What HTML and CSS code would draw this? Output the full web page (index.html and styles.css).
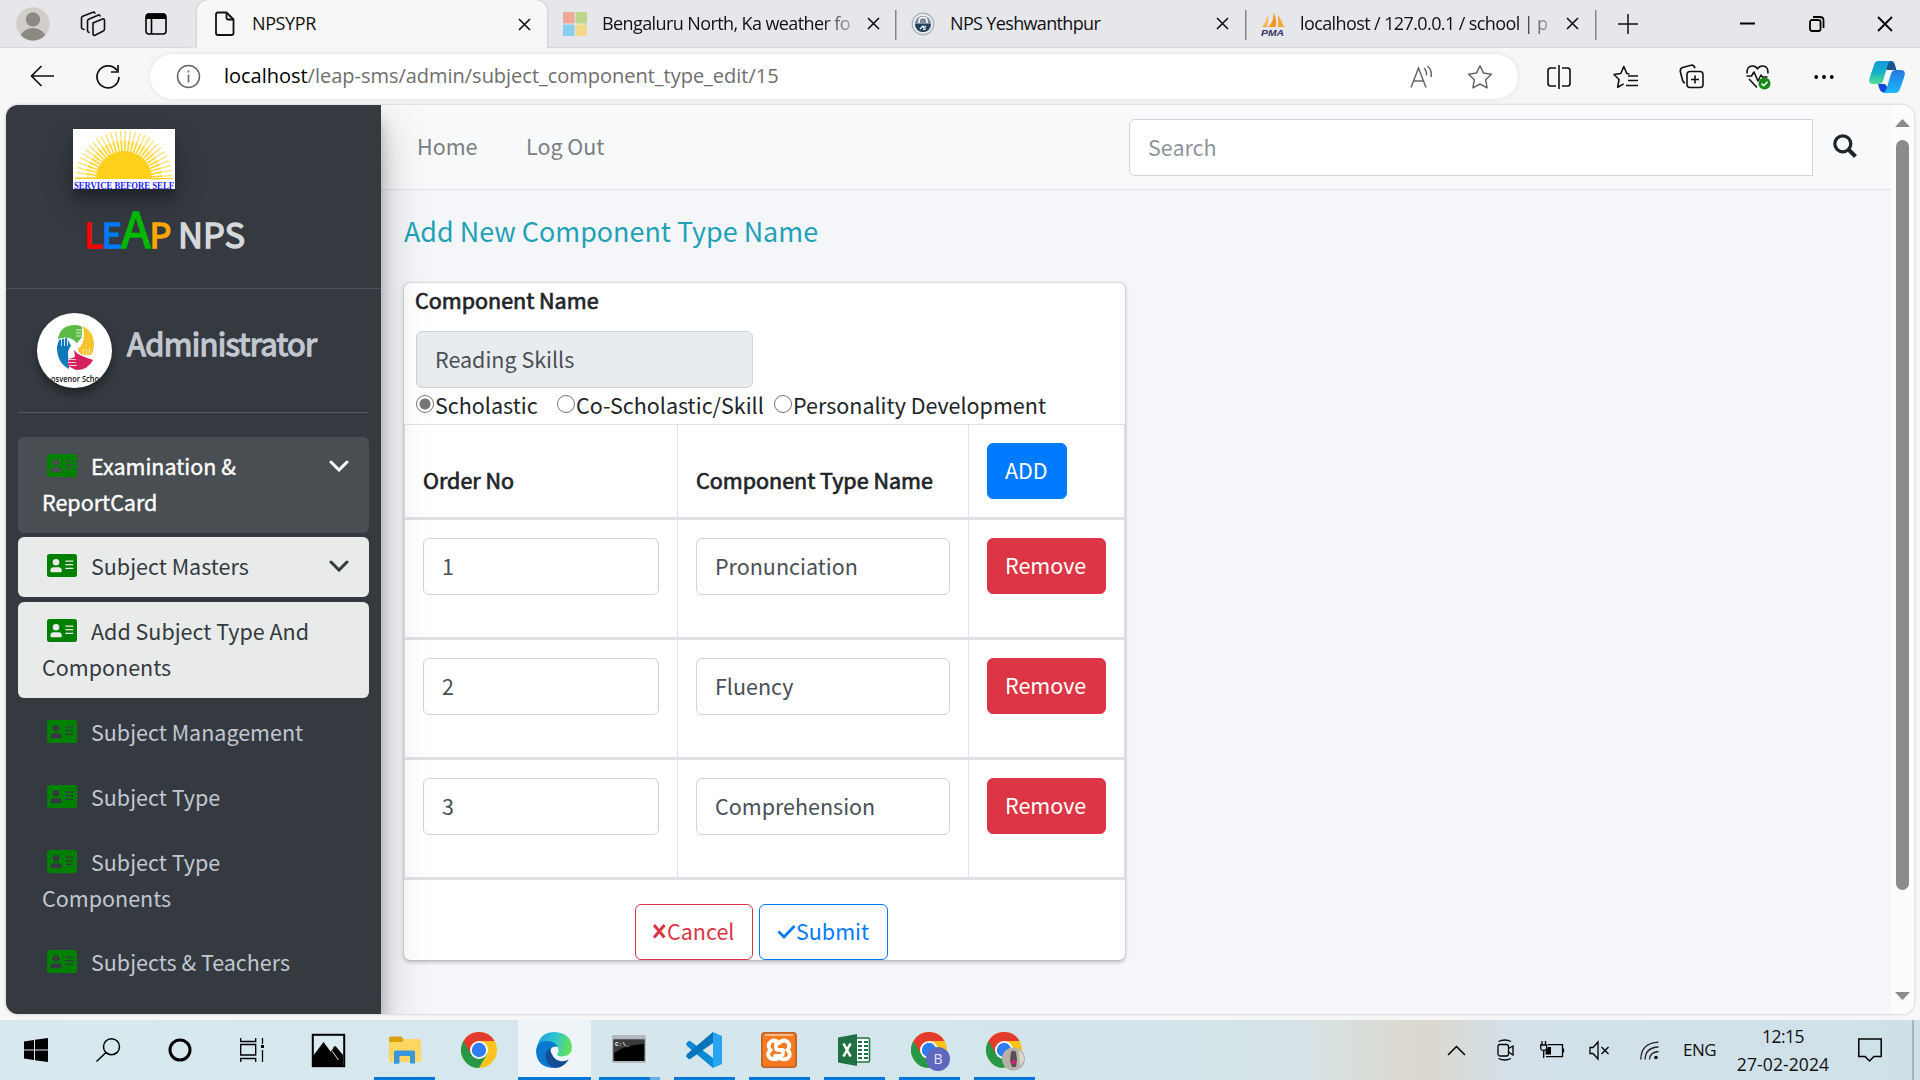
FILE: index.html
```html
<!DOCTYPE html>
<html lang="en">
<head>
<meta charset="utf-8">
<title>NPSYPR</title>
<link rel="stylesheet" href="styles.css">
</head>
<body>
<svg class="defs" aria-hidden="true">
  <symbol id="idcard" viewBox="0 0 30 23"><path fill="currentColor" fill-rule="evenodd" d="M2.500 0h25A2.500 2.500 0 0 1 30 2.500v18a2.500 2.500 0 0 1-2.500 2.500h-25A2.500 2.500 0 0 1 0 20.500v-18A2.500 2.500 0 0 1 2.500 0zM9 5a3.300 3.300 0 1 0 0 6.600A3.300 3.300 0 0 0 9 5zM6.500 13.300A3 3 0 0 0 3.500 16.300v1.200q0 .700.700.700h9.800q.700 0 .700-.700v-1.200a3 3 0 0 0-3-3zM18.300 6.500v1.200h8V6.500zM18.300 10v1.300h8V10zM18.300 13.700v1.200h8v-1.200z"/></symbol>
  <symbol id="close" viewBox="0 0 13 13"><path d="M1 1l11 11M12 1L1 12" stroke="currentColor" stroke-width="1.600" fill="none"/></symbol>
  <symbol id="chev" viewBox="0 0 20 12"><path d="M2 2l8 8 8-8" fill="none" stroke="currentColor" stroke-width="3" stroke-linecap="round" stroke-linejoin="miter"/></symbol>
  <symbol id="chrome" viewBox="0 0 36 36">
    <circle cx="18" cy="18" r="18" fill="#fcc31e"/>
    <path d="M2.400 9A18 18 0 0 0 18 36l7.800-13.500L18 18z" fill="#279847"/>
    <path d="M10.200 22.500L2.400 9A18 18 0 0 1 33.600 9H18z" fill="#e33b2e"/>
    <circle cx="18" cy="18" r="9" fill="#fff"/><circle cx="18" cy="18" r="7.200" fill="#2f7cee"/>
  </symbol>
</svg>

<header class="tabstrip">
  <div class="tab-tools">
    <svg width="34" height="34" viewBox="0 0 34 34"><defs><clipPath id="av"><circle cx="17" cy="17" r="16.500"/></clipPath></defs><circle cx="17" cy="17" r="16.800" fill="#d2cfcb"/><g clip-path="url(#av)" fill="#8d8983"><circle cx="17" cy="12.500" r="7.200"/><ellipse cx="17" cy="31" rx="12.500" ry="10"/></g></svg>
    <svg class="i-work" width="26" height="26" viewBox="0 0 26 26" fill="none" stroke="#111" stroke-width="1.600" stroke-linejoin="round" stroke-linecap="round"><path d="M13 12l9.500-4q2-.600 2 1.400V18q0 1.500-1.200 2L15 24.200q-2 .700-2-1.400z"/><path d="M9 21.500q-1.500-.500-1.500-2V10q0-1.200 1.200-1.800L18.500 4q1.500-.400 1.500 1"/><path d="M4 18.500q-2.500-.500-2.500-2V7q0-1.200 1.200-1.800L13 1.200q1.500-.400 1.800 1"/></svg>
    <svg class="i-tabs" width="22" height="22" viewBox="0 0 22 22"><rect x="1" y="1" width="20" height="20" rx="3" fill="none" stroke="#000" stroke-width="1.600"/><path d="M1 6V3q0-2.500 2.500-2.500h15Q21 .500 21 3v3z"/><path d="M6.500 6v15" stroke="#000" stroke-width="1.600"/></svg>
  </div>
  <div class="tab active">
    <svg width="24" height="26" viewBox="0 0 24 26" fill="none" stroke="#111" stroke-width="1.800" stroke-linejoin="round"><path d="M5 1.500h8.500l7 7V22q0 2-2 2H5q-2 0-2-2V3.500q0-2 2-2z"/><path d="M13.500 1.500V7q0 1.500 1.500 1.500h5.500"/></svg>
    <span class="tt t1">NPSYPR</span><svg class="x" width="13" height="13"><use href="#close"/></svg>
  </div>
  <div class="tab t2">
    <svg width="24" height="24" viewBox="0 0 24 24"><path fill="#eea898" d="M0 0h11.500v11.500H0z"/><path fill="#bcd78c" d="M12.500 0H24v11.500H12.500z"/><path fill="#8bceef" d="M0 12.500h11.500V24H0z"/><path fill="#f3d78b" d="M12.500 12.500H24V24H12.500z"/></svg>
    <span class="tt fade">Bengaluru North, Ka weather fo</span><svg class="x" width="13" height="13"><use href="#close"/></svg>
  </div>
  <div class="tab sep">
    <svg width="24" height="24" viewBox="0 0 24 24"><circle cx="12" cy="12" r="10.800" fill="#e9ebee" stroke="#aab4bd" stroke-width="1.300"/><circle cx="12" cy="12" r="8" fill="#7d8b9c"/><path d="M4 12h16a8 8 0 0 1-16 0z" fill="#24405f"/><path d="M8 11V9q0-3.500 4-3.500T16 9v2" stroke="#fff" stroke-width="1.600" fill="none"/><path d="M9 17l3-3 1 2 2-2M12 17.500l3-.500" stroke="#fff" stroke-width="1.200" fill="none"/></svg>
    <span class="tt t3">NPS Yeshwanthpur</span><svg class="x" width="13" height="13"><use href="#close"/></svg>
  </div>
  <div class="tab sep">
    <svg width="24" height="24" viewBox="0 0 24 24"><path d="M7 3q1 6-1 12H1Q5 10 7 3z" fill="#fbb55c"/><path d="M12.500 0q4 8 2 15H7q6-5 5.500-15z" fill="#f8931c"/><path d="M17 3q4 6 6 12h-6z" fill="#fba93f"/><text x="0" y="23.500" class="pma" textLength="23" lengthAdjust="spacingAndGlyphs">PMA</text></svg>
    <span class="tt fade t4">localhost / 127.0.0.1 / school | p</span><svg class="x" width="13" height="13"><use href="#close"/></svg>
  </div>
  <div class="tab-end sep">
    <svg width="20" height="20" viewBox="0 0 20 20"><path d="M10 0v20M0 10h20" stroke="#111" stroke-width="1.500"/></svg>
    <svg class="w1" width="15" height="16" viewBox="0 0 15 16"><path d="M0 7.500h15" stroke="#000" stroke-width="2"/></svg>
    <svg class="w2" width="16" height="16" viewBox="0 0 16 16" fill="none" stroke="#000" stroke-width="1.800"><rect x="1" y="4" width="10.500" height="11" rx="2"/><path d="M4 1h7q3.500 0 3.500 3.500V12"/></svg>
    <svg class="w3" width="16" height="16" viewBox="0 0 16 16"><path d="M1 1l14 14M15 1L1 15" stroke="#000" stroke-width="1.800"/></svg>
  </div>
</header>

<div class="toolbar">
  <svg class="back" width="24" height="22" viewBox="0 0 24 22" fill="none" stroke="#111" stroke-width="1.700"><path d="M11.500 1L1.500 11l10 10M1.500 11H24"/></svg>
  <svg class="reload" width="26" height="26" viewBox="0 0 26 26" fill="none" stroke="#111" stroke-width="1.700"><path d="M22 6.500A11 11 0 1 0 24 13"/><path d="M23 1v7h-7"/></svg>
  <div class="pill">
    <svg width="25" height="25" viewBox="0 0 25 25"><circle cx="12.500" cy="12.500" r="11" fill="none" stroke="#666" stroke-width="1.500"/><path d="M12.500 10.500v8M12.500 6.500v2" stroke="#666" stroke-width="1.600"/></svg>
    <span class="url"><b>localhost</b>/leap-sms/admin/subject_component_type_edit/15</span>
    <svg class="aloud" width="24" height="24" viewBox="0 0 24 24" fill="none" stroke="#666" stroke-width="1.500"><path d="M1 22.500L8.500 3 16 22.500M3.700 16h9.600M14 3q3 3 2.500 7.500M17.500 1q5 4.500 3.500 11"/></svg>
    <svg class="star" width="26" height="26" viewBox="0 0 26 26" fill="none" stroke="#666" stroke-width="1.500" stroke-linejoin="round"><path d="M13 1.800l3.500 7.300 7.900 1.100-5.700 5.600 1.400 8-7.100-3.800-7.100 3.800 1.400-8-5.700-5.600 7.900-1.100z"/></svg>
  </div>
  <svg class="a1" width="24" height="24" viewBox="0 0 24 24" fill="none" stroke="#111" stroke-width="1.600"><path d="M12 0v24M9 3H3.500Q1 3 1 5.500v13Q1 21 3.500 21H9M15 3h5.500Q23 3 23 5.500v13q0 2.500-2.500 2.500H15"/></svg>
  <svg class="a2" width="26" height="24" viewBox="0 0 26 24" fill="none" stroke="#111" stroke-width="1.600" stroke-linejoin="round"><path d="M16.500 9L13.800 8.500 10.800 1.500 7.800 8.500 1 9.500l5 5-1.300 7.700 6-3.300M15 11h10M15 15.500h10M13 20.500h12"/></svg>
  <svg class="a3" width="25" height="25" viewBox="0 0 25 25" fill="none" stroke="#111" stroke-width="1.600"><rect x="8" y="7.500" width="16" height="16" rx="3"/><path d="M16 11.500v8M12 15.500h8M6 19q-2-.700-2.500-3L1.300 7.500Q1 4.500 3.500 3.500L12 1.200q3-.500 4 3"/></svg>
  <svg class="a4" width="26" height="26" viewBox="0 0 26 26" fill="none" stroke="#111" stroke-width="1.600" stroke-linejoin="round"><path d="M2 9.500Q1.500 2 7.500 2q3.500 0 5 3 1.500-3 5-3 6 0 5.500 7.500M4 15l8 8.500M1.500 12h5l2.500-4 4 9 3-6 1.500 2h5"/><circle cx="19.500" cy="19.500" r="6" fill="#138a17" stroke="none"/><path d="M16.500 19.500l2.200 2.200 3.800-4" stroke="#fff"/></svg>
  <svg class="a5" width="20" height="6" viewBox="0 0 20 6"><circle cx="2.200" cy="3" r="1.900"/><circle cx="10" cy="3" r="1.900"/><circle cx="17.800" cy="3" r="1.900"/></svg>
  <svg class="a6" width="36" height="32" viewBox="0 0 36 32"><defs><linearGradient id="g1" x1="0" y1="0" x2="0" y2="1"><stop offset="0" stop-color="#1596dd"/><stop offset=".5" stop-color="#12b3c5"/><stop offset="1" stop-color="#56e08f"/></linearGradient><linearGradient id="g2" x1="0" y1="0" x2="0" y2="1"><stop offset="0" stop-color="#2778de"/><stop offset="1" stop-color="#19b9fa"/></linearGradient></defs><path d="M19 0h3q3 0 4 4l1.500 5H17z" fill="#17578e"/><path d="M9 0h13q-3 1-4 6l-4 14q-1 3-4 3H4Q-1 23 .500 17L5 4Q6 0 9 0z" fill="url(#g1)"/><path d="M9 23h7l3 4-2 5q-5 0-6.500-4z" fill="#1847d8"/><path d="M27 9h5q5 0 3.500 6L31 28q-1.500 4-5 4H14q3-1 4-6l4-13q1-4 5-4z" fill="url(#g2)"/></svg>
</div>

<div class="page">
  <aside class="sidebar">
    <div class="brand">
      <svg class="logo" width="102" height="60" viewBox="0 0 102 60"><rect width="102" height="60" fill="#fff"/><circle class="ray-in" cx="51" cy="50" r="33" pathLength="240"/><circle class="ray-out" cx="51" cy="50" r="43" pathLength="240"/><path d="M23 50a28 28 0 0 1 56 0z" fill="#ffd11c"/><path d="M2 49.500h98" stroke="#ffd11c"/><rect y="50.500" width="102" height="10" fill="#fff"/><text x="1" y="59.500" class="motto" textLength="100" lengthAdjust="spacingAndGlyphs">SERVICE BEFORE SELF</text></svg>
      <div class="leap"><i class="r">L</i><i class="b">E</i><i class="g">A</i><i class="o">P</i> NPS</div>
    </div>
    <div class="user">
      <svg class="badge" width="75" height="75" viewBox="0 0 75 75"><defs><clipPath id="cc"><circle cx="37.500" cy="37.500" r="37.500"/></clipPath></defs><circle cx="37.500" cy="37.500" r="37.500" fill="#fff"/><g clip-path="url(#cc)">
        <path d="M21 26Q23 12 38 12q5 0 7 2v10l-5 6q-6-6-12-5-4 0-7 1z" fill="#5cbb46"/><path d="M39 17h6M39 20h6M39 23h6" stroke="#d5f0c4"/>
        <path d="M46 13q11 6 11 18 0 7-3 11h-8q-6-3-5-6 6-5 6-14z" fill="#f6c52e"/><path d="M46.500 36v6M49.500 36v6M52.500 35v6" stroke="#fdeaa8"/>
        <path d="M22 27l8-2 4 8q-3 3-3 8l1 15Q20 50 20 34z" fill="#0f78b9"/><path d="M24.500 25v8M27.500 24v9M30.500 25v8" stroke="#d0eaf6"/>
        <path d="M37 37q3 4 8 6t11 4q-5 10-17 10l-8-4 1-7 6-2z" fill="#d61f5c"/><path d="M31 46.500h8M31 49.500h8M32 52.500h8" stroke="#f9c9d6"/>
        <text x="14" y="69" class="gsch" textLength="48" lengthAdjust="spacingAndGlyphs">osvenor Scho</text></g></svg>
      <span class="admin">Administrator</span>
    </div>
    <nav class="menu">
      <a class="item on"><svg class="id" width="30" height="23"><use href="#idcard"/></svg>Examination &amp;<svg class="ch" width="20" height="12"><use href="#chev"/></svg><br>ReportCard</a>
      <a class="item light"><svg class="id" width="30" height="23"><use href="#idcard"/></svg>Subject Masters<svg class="ch" width="20" height="12"><use href="#chev"/></svg></a>
      <a class="item light"><svg class="id" width="30" height="23"><use href="#idcard"/></svg>Add Subject Type And<br>Components</a>
      <a class="item"><svg class="id" width="30" height="23"><use href="#idcard"/></svg>Subject Management</a>
      <a class="item"><svg class="id" width="30" height="23"><use href="#idcard"/></svg>Subject Type</a>
      <a class="item"><svg class="id" width="30" height="23"><use href="#idcard"/></svg>Subject Type<br>Components</a>
      <a class="item"><svg class="id" width="30" height="23"><use href="#idcard"/></svg>Subjects &amp; Teachers</a>
    </nav>
  </aside>
  <main class="main">
    <div class="navbar">
      <a>Home</a><a>Log Out</a>
      <div class="search">Search</div>
      <svg class="mag" width="24" height="24" viewBox="0 0 24 24" fill="none" stroke="#212529"><circle cx="9.800" cy="9.800" r="8" stroke-width="3.300"/><path d="M15.500 15.500l7 7" stroke-width="4"/></svg>
    </div>
    <h1 class="title">Add New Component Type Name</h1>
    <section class="card">
      <div class="label">Component Name</div>
      <div class="field off">Reading Skills</div>
      <div class="radios"><span class="radio sel"></span><span class="ra">Scholastic</span><span class="radio"></span><span class="rb">Co-Scholastic/Skill</span><span class="radio"></span><span>Personality Development</span></div>
      <div class="grid">
        <div class="cell head">Order No</div><div class="cell head">Component Type Name</div><div class="cell act"><span class="btn add">ADD</span></div>
        <div class="cell"><div class="field">1</div></div><div class="cell"><div class="field">Pronunciation</div></div><div class="cell"><span class="btn rem">Remove</span></div>
        <div class="cell"><div class="field">2</div></div><div class="cell"><div class="field">Fluency</div></div><div class="cell"><span class="btn rem">Remove</span></div>
        <div class="cell"><div class="field">3</div></div><div class="cell"><div class="field">Comprehension</div></div><div class="cell"><span class="btn rem">Remove</span></div>
      </div>
      <div class="foot">
        <span class="btn cancel"><svg width="15" height="15" viewBox="0 0 15 15"><path d="M2 1l10.500 12.500M12.500 1L2 13.500" stroke="currentColor" stroke-width="3"/></svg>Cancel</span>
        <span class="btn submit"><svg width="19" height="15" viewBox="0 0 19 15"><path d="M1.500 7.500l5.500 5.500L17.500 2" stroke="currentColor" stroke-width="2.700" fill="none"/></svg>Submit</span>
      </div>
    </section>
  </main>
  <div class="scroll"><svg width="15" height="8"><path d="M7.500 0L15 8H0z" fill="#8b8b8b"/></svg><i></i><svg class="dn" width="15" height="8"><path d="M7.500 8L15 0H0z" fill="#8b8b8b"/></svg></div>
</div>

<footer class="taskbar">
  <div class="tb plain"><svg width="24" height="24" viewBox="0 0 24 24"><path d="M0 3.400l10-1.400v9.500H0zM11 1.800L24 0v11.500H11zM0 12.500h10V22L0 20.600zM11 12.500h13V24l-13-1.800z"/></svg></div>
  <div class="tb plain"><svg width="24" height="24" viewBox="0 0 24 24" fill="none" stroke="#000" stroke-width="1.500"><circle cx="15.500" cy="8.700" r="8"/><path d="M10 14.500L.500 23.500"/></svg></div>
  <div class="tb plain"><svg width="24" height="24" viewBox="0 0 24 24"><circle cx="12" cy="12" r="10" fill="none" stroke="#000" stroke-width="3"/></svg></div>
  <div class="tb plain"><svg width="24" height="24" viewBox="0 0 24 24" fill="none" stroke="#000" stroke-width="1.300"><path d="M.700 6.500h15v10.500H.700zM.700 0v3.500h15V0M.700 24v-3.500h15V24M22.500 0v6M22.500 12v12"/><path d="M21 7h3v3h-3z" fill="#000" stroke="none"/></svg></div>
  <div class="tb photo"><svg width="33" height="33" viewBox="0 0 33 33"><rect x=".800" y=".800" width="31.400" height="31.400" fill="#dcebf1" stroke="#000" stroke-width="2"/><path d="M1 22L11.500 8l7 9.500 2-2 1-2.500 2-1L31 21v11H1z"/><path d="M20 17l6.500 9" stroke="#dcebf1"/></svg></div>
  <div class="tb run"><svg width="32" height="28" viewBox="0 0 32 28"><path d="M0 2q0-1.500 1.500-1.500h11L15 4h15q2 0 2 2v5H0z" fill="#dca10b"/><path d="M0 6h13l3-3h14q2 0 2 2v19q0 2-2 2H2q-2 0-2-2z" fill="#ffd662"/><path d="M5 28V16q0-1.500 1.500-1.500h18Q26 14.500 26 16v11.500h-5V20H10.500v7.500z" fill="#3a96dc"/></svg></div>
  <div class="tb gc"><svg width="36" height="36"><use href="#chrome"/></svg></div>
  <div class="tb edge"><svg width="36" height="36" viewBox="0 0 36 36"><defs><linearGradient id="e1" x1="0" y1=".3" x2="1" y2=".5"><stop offset="0" stop-color="#1ba0e0"/><stop offset=".5" stop-color="#31c5cf"/><stop offset="1" stop-color="#66e550"/></linearGradient></defs><path d="M1 15Q4 0 18.500 0 35 1 36 15q0 9-10 9.500-6 0-4.500-3 2-3 .500-6Q15 8 1 15z" fill="url(#e1)"/><path d="M0 18Q1 9 11 9q8 0 11 6-6-2-8.500 5-1.500 8 6 16Q0 36 0 18z" fill="#0a78d0"/><path d="M14 16.500q-6 4-4 11 3 8.500 11 8.500 7-1 12-9-4 3-9 2-8-1.500-10-12.500z" fill="#134d94"/></svg></div>
  <div class="tb run multi"><svg width="34" height="28" viewBox="0 0 34 28"><rect width="34" height="28" rx="1.500" fill="#b3b8bd"/><rect x="1.500" y="4.500" width="31" height="21.500" fill="#000"/><path d="M2 5h30v4Q12 10 2 18z" fill="#3c3c3c"/><text x="3" y="10.500" class="cmd">C:\_</text></svg></div>
  <div class="tb run"><svg width="36" height="36" viewBox="0 0 36 36"><path d="M0 11.500L3.500 8.500 27 26v10L1 14z" fill="#0a8ad4"/><path d="M0 24.500l3.500 3L27 11V0L1 22z" fill="#0673ba"/><path d="M27 0l9 4v28l-9 4z" fill="#25a5f2"/></svg></div>
  <div class="tb run"><svg width="36" height="36" viewBox="0 0 36 36"><rect x=".800" y=".800" width="34.400" height="34.400" rx="3" fill="#f77a20" stroke="#bb632a" stroke-width="1.600"/><path d="M4 3h28" stroke="#fbb98a" stroke-width="2"/><path d="M18 11q-4-4-8-1.500-4.500 4-.500 8.500-4.500 4-.500 8 5 3 9-.500 4 3.500 9 .500 4-4-.500-8 4-4.500-.500-8.500-4-2.500-8 1.500zM15 12v4q0 2 3 2h4M14 24h5q3 0 3-4" fill="none" stroke="#fff" stroke-width="3.800" stroke-linecap="round"/></svg></div>
  <div class="tb run"><svg width="32" height="32" viewBox="0 0 32 32"><path d="M18 4h12q1.500 0 1.500 1.500v21Q31.500 28 30 28H18z" fill="#fff" stroke="#1f7144" stroke-width="1.500"/><path d="M20 8h4M26 8h4M20 12h4M26 12h4M20 16h4M26 16h4M20 20h4M26 20h4M20 24h4M26 24h4" stroke="#1f7144" stroke-width="2"/><path d="M0 3.500L19 0v32L0 28.500z" fill="#1f7144"/><path d="M5.500 9.500l7 13M12.500 9.500l-7 13" stroke="#fff" stroke-width="2.600"/></svg></div>
  <div class="tb run"><svg width="42" height="42" viewBox="-3 -3 42 42"><use href="#chrome" width="36" height="36"/><circle cx="27" cy="27" r="12" fill="#5d68be"/><text x="27" y="31.500" class="bb">B</text></svg></div>
  <div class="tb run"><svg width="42" height="42" viewBox="-3 -3 42 42"><use href="#chrome" width="36" height="36"/><circle cx="27.500" cy="27" r="11.500" fill="#b6b2a9"/><path d="M25 20q2-3 5 0l1 8-1 7h-4l-2-6z" fill="#595055"/><path d="M33 18q5 4 5 10l-4 6z" fill="#ddd8cc"/><circle cx="27.500" cy="30" r="2.200" fill="#d81f79"/></svg></div>
  <div class="tray">
    <svg class="y1" width="19" height="11" viewBox="0 0 19 11"><path d="M1 10l8.500-8.500L18 10" fill="none" stroke="#000" stroke-width="1.500"/></svg>
    <svg class="y2" width="17" height="22" viewBox="0 0 17 22" fill="none" stroke="#000" stroke-width="1.300"><rect x="1" y="5.500" width="10.500" height="11.500" rx="2"/><path d="M11.500 9.500L16 7v9l-4.500-3M1.500 2.500Q8-.500 14 2.500M1.500 19.500q6.500 3 12.500 0"/></svg>
    <svg class="y3" width="25" height="18" viewBox="0 0 25 18" fill="none" stroke="#000" stroke-width="1.300"><path d="M8 3.700h14.500v12H6M23.500 7.500v4M2 0v4M5.500 0v4M.700 4h6v3q0 2.500-3 2.500T.700 7zM3.700 9.500V17"/><path d="M5.500 13.500V11L8 6h3v7.500z" fill="#000" stroke="none"/></svg>
    <svg class="y4" width="21" height="19" viewBox="0 0 21 19" fill="none" stroke="#000" stroke-width="1.300"><path d="M1 6.500h3L9 1v17l-5-5.500H1zM12.500 6l7 7M19.500 6l-7 7"/></svg>
    <svg class="y5" width="19" height="19" viewBox="0 0 19 19" fill="none" stroke="#222" stroke-width="1.300"><path d="M.800 18.500Q1 2 18.500 1.200M5 18.500Q5.500 6.500 18.500 6M9.500 18.500Q10 11 18.500 10.500"/><circle cx="16" cy="16.500" r="1.800" fill="#000" stroke="none"/></svg>
    <span class="eng">ENG</span>
    <div class="clock"><span>12:15</span><span class="date">27-02-2024</span></div>
    <svg class="y6" width="24" height="24" viewBox="0 0 24 24" fill="none" stroke="#000" stroke-width="1.500"><path d="M.800 1h22.400v17.500H16L11.500 23 7 18.500H.800z"/></svg>
    <i class="show"></i>
  </div>
</footer>
</body>
</html>
```

FILE: styles.css
```css
* { box-sizing: border-box; }
body { margin: 0; width: 1920px; height: 1080px; overflow: hidden; background: #f7f7f7; font-family: "Noto Sans CJK SC", sans-serif; font-size: 21.5px; line-height: 36px; color: #212529; }
svg { display: block; flex: none; overflow: visible; }
.defs { position: absolute; width: 0; height: 0; }

.tabstrip { display: flex; height: 48px; background: #e6e7eb; font: 18px/24px "Open Sans", sans-serif; color: #111; }
.tab-tools { width: 197px; display: flex; align-items: center; padding-left: 16px; border-bottom: 1px solid #d6d7db; border-bottom-right-radius: 10px; }
.i-work { margin-left: 30px; }
.i-tabs { margin-left: 39px; }
.tab { width: 350px; display: flex; align-items: center; padding: 0 16px 0 16px; border-bottom: 1px solid #d6d7db; }
.tab.active { width: 350px; background: #f7f7f7; border-radius: 12px 12px 0 0; border: 0; box-shadow: 0 0 3px rgba(0,0,0,.18); clip-path: inset(0 -4px 0 -4px); }
.tab.t2 { width: 348px; padding-right: 15px; }
.tt { flex: 1; margin: -2px 8px 0 15px; white-space: nowrap; letter-spacing: -.6px; }
.t1 { letter-spacing: -.4px; }
.t3 { letter-spacing: -.65px; }
.t4 { letter-spacing: -.6px; }
.x { color: #111; }
.fade { -webkit-mask-image: linear-gradient(90deg, #000 86%, transparent 101%); mask-image: linear-gradient(90deg, #000 86%, transparent 101%); }
.sep { background: linear-gradient(#868686, #868686) 0 10px / 1.500px 30px no-repeat; }
.pma { font: italic bold 9.500px "Liberation Sans", sans-serif; fill: #35346c; }
.tab-end { flex: 1; display: flex; align-items: center; padding-left: 23px; border-bottom: 1px solid #d6d7db; }
.w1 { margin-left: 102px; }
.w2 { margin-left: 54px; }
.w3 { margin-left: 52px; }

.toolbar { display: flex; align-items: center; height: 57px; background: #f7f7f7; }
.back { margin-left: 30px; margin-top: -1px; }
.reload { margin-left: 41px; }
.pill { width: 1368px; height: 45px; margin-left: 29px; border-radius: 23px; background: #fff; display: flex; align-items: center; padding-left: 26px; box-shadow: 0 0 5px rgba(0,0,0,.1); }
.url { width: 1186px; margin-left: 23px; margin-top: -1px; font: 20px/28px "Open Sans", sans-serif; letter-spacing: -.02px; color: #6e6e6e; white-space: nowrap; }
.url b { font-weight: 400; color: #000; }
.star { margin-left: 33px; }
.a1 { margin-left: 29px; }
.a2 { margin-left: 42px; }
.a3 { margin-left: 40px; }
.a4 { margin-left: 41px; }
.a5 { margin-left: 43px; }
.a6 { margin-left: 35px; }

.page { display: flex; height: 909px; margin: 0 6px; border-radius: 12px; overflow: hidden; background: #f4f6f9; box-shadow: 0 0 3px rgba(0,0,0,.25); }
.sidebar { width: 375px; background: #343a40; z-index: 1; box-shadow: 0 21px 42px rgba(0,0,0,.25), 0 15px 15px rgba(0,0,0,.22); }
.brand { height: 184px; border-bottom: 1px solid #4b545c; padding: 24px 0 0 67px; }
.logo { overflow: hidden; box-shadow: 0 15px 30px rgba(0,0,0,.19), 0 9px 9px rgba(0,0,0,.23); }
.ray-in { fill: none; stroke: #ffd740; stroke-width: 11; stroke-dasharray: 2.300 1.700; }
.ray-out { fill: none; stroke: #ffe06a; stroke-width: 11; stroke-dasharray: 1.100 2.900; stroke-dashoffset: -.600; }
.motto { font: bold 9.500px "Liberation Serif", serif; fill: #1c1cff; }
.leap { margin: 16px 0 0 11px; font-size: 34.500px; line-height: 56px; color: #d6d8da; white-space: nowrap; -webkit-text-stroke: 1.400px; }
.leap i { font-style: normal; }
.r { color: #f00; } .b { color: #007bff; } .g { color: #00b800; font-size: 49px; line-height: 40px; } .o { color: orange; }
.r, .b, .g, .o { letter-spacing: -1.100px; }
.user { display: flex; height: 124px; margin: 0 12px; padding: 24px 0 0 19px; border-bottom: 1px solid #4f5962; }
.badge { border-radius: 50%; box-shadow: 0 6px 9px rgba(0,0,0,.4); }
.gsch { font: 600 9.500px "Open Sans", sans-serif; fill: #111; }
.admin { margin: 6px 0 0 15px; font-size: 31px; line-height: 48px; letter-spacing: -.7px; color: #c2c7d0; -webkit-text-stroke: 1.300px; }
.menu { margin: 23.600px 12px 0; display: flex; flex-direction: column; gap: 4.800px; }
.item { display: block; padding: 11px 25px 13px 24px; border-radius: 6px; color: #c2c7d0; white-space: nowrap; }
.id { display: inline-block; margin: 0 14px 0 5px; vertical-align: -2px; color: green; }
.ch { float: right; margin: 12px -5px 0 0; }
.on { background: #494e52; color: #fff; -webkit-text-stroke: .4px; }
.light { background: #e9ebea; color: #343a40; }

.main { flex: 1; min-width: 0; }
.navbar { display: flex; height: 85px; background: #f8f9fb; border-bottom: 1px solid #dee2e6; padding: 14px 0 0 36px; color: #7b7f83; }
.navbar a { padding-top: 9px; width: 109px; white-space: nowrap; }
.search { width: 684px; height: 57px; margin-left: 494px; border: 1px solid #ced4da; border-radius: 6px 0 0 6px; background: #fff; padding: 9px 18px; color: #8f959b; }
.mag { margin: 15px 0 0 20px; }
.title { margin: 19px 0 0 23px; font-size: 26.900px; line-height: 44px; font-weight: 400; color: #1fa2b8; }
.card { width: 721px; height: 677px; margin: 30px 0 0 23px; background: #fff; border-radius: 6px; box-shadow: 0 0 1.500px rgba(0,0,0,.25), 0 1.500px 4px rgba(0,0,0,.25); }
.label { padding: 0 11px; height: 48px; line-height: 34px; }
.label, .head { -webkit-text-stroke: .7px; }
.field { height: 57px; border: 1px solid #ced4da; border-radius: 6px; background: #fff; padding: 9px 18px; color: #495057; white-space: nowrap; }
.off { width: 337px; margin-left: 12px; background: #e9ecef; }
.radios { display: flex; align-items: center; height: 36px; padding: 0 0 2px 12px; white-space: nowrap; }
.radio { flex: none; width: 18px; height: 18px; margin: -3px 1px 0 0; border: 1.500px solid #767676; border-radius: 50%; background: #fff; }
.sel { background: radial-gradient(#767676 5px, #fff 6px); }
.ra { width: 122px; } .rb { width: 198px; }
.grid { display: grid; grid-template-columns: 274px 291px 156px; grid-template-rows: 95px repeat(3, 120px); border-top: 1px solid #dee2e6; }
.cell { padding: 18px; border-right: 1px solid #dee2e6; border-bottom: 3px solid #dee2e6; }
.cell:nth-child(3n+1) { border-left: 1px solid #dee2e6; padding-right: 18px; padding-left: 18px; }
.cell:nth-child(3n) { padding-right: 17px; }
.head { padding-top: 37px; white-space: nowrap; }
.btn { display: inline-flex; align-items: center; height: 56px; border: 1px solid; border-radius: 6px; padding: 0 17px 2px; }
.add { width: 80px; background: #007bff; border-color: #007bff; color: #fff; }
.rem { width: 119px; background: #dc3545; border-color: #dc3545; color: #fff; }
.foot { display: flex; gap: 6px; margin: 24px 0 0 231px; }
.cancel { width: 118px; padding-left: 16px; color: #dc3545; }
.submit { width: 129px; color: #007bff; }
.scroll { width: 23px; background: #fcfcfc; display: flex; flex-direction: column; align-items: center; padding: 14px 0; }
.scroll i { width: 13px; height: 750px; margin-top: 13px; border-radius: 7px; background: #8b8b8b; }
.dn { margin-top: auto; }

.taskbar { display: flex; height: 60px; margin-top: 6px; background: linear-gradient(90deg, #d8e8ef 0, #d3e5ec 1150px, #d6e3e6 1300px, #dcdad3 1400px, #dcd8d0 1430px, #d3e0e9 1510px, #cfe1e8 100%); font-family: "Open Sans", sans-serif; color: #111; }
.tb { width: 61px; margin-right: 14px; display: flex; align-items: center; justify-content: center; border-bottom: 3px solid transparent; border-top: 3px solid transparent; }
.plain { width: 72px; margin: 0; }
.photo { width: 81px; margin: 0 5px 0 0; }
.run { border-bottom-color: #0078d7; }
.tb.gc { padding-right: 2px; }
.edge { width: 73px; margin: 0 8px 0 -6px; background: #eef4f8; border-top-color: #eef4f8; border-bottom-color: #0078d7; }
.edge svg { margin-right: 1px; }
.multi { border-image: linear-gradient(90deg, #0078d7 80%, #65aee8 80%) 3; border-top: 0; }
.run ~ .run svg { margin-right: 1px; }
.cmd { font: bold 6px "Liberation Mono", monospace; fill: #fff; }
.bb { font: 14px "Open Sans", sans-serif; fill: #e8eaf8; text-anchor: middle; }
.tray { flex: 1; display: flex; align-items: center; }
.y1 { margin-left: 398px; }
.y2 { margin-left: 31px; }
.y3 { margin-left: 26px; }
.y4 { margin-left: 24px; }
.y5 { margin-left: 30px; }
.eng { margin-left: 24px; font-size: 17px; line-height: 24px; letter-spacing: -.5px; width: 34px; }
.clock { width: 120px; margin-left: 6px; display: flex; flex-direction: column; align-items: center; font-size: 17.500px; line-height: 28px; letter-spacing: -.5px; }
.date { letter-spacing: .1px; }
.y6 { margin-left: 15px; }
.show { width: 2px; height: 60px; margin-left: 30px; background: #a5b4bf; }
```
